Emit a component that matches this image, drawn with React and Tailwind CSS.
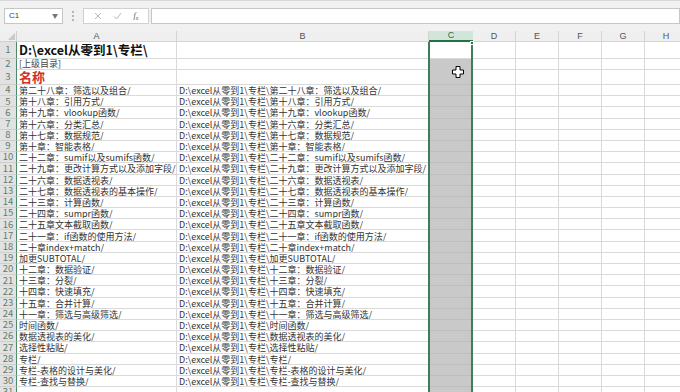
import React from 'react';

const base = 'D:\\excel从零到1\\专栏\\';

const items = [
  '第二十八章：筛选以及组合/',
  '第十八章：引用方式/',
  '第十九章：vlookup函数/',
  '第十六章：分类汇总/',
  '第十七章：数据规范/',
  '第十章：智能表格/',
  '二十二章：sumif以及sumifs函数/',
  '二十九章：更改计算方式以及添加字段/',
  '二十六章：数据透视表/',
  '二十七章：数据透视表的基本操作/',
  '二十三章：计算函数/',
  '二十四章：sumpr函数/',
  '二十五章文本截取函数/',
  '二十一章：if函数的使用方法/',
  '二十章index+match/',
  '加更SUBTOTAL/',
  '十二章：数据验证/',
  '十三章：分裂/',
  '十四章：快速填充/',
  '十五章：合并计算/',
  '十一章：筛选与高级筛选/',
  '时间函数/',
  '数据透视表的美化/',
  '选择性粘贴/',
  '专栏/',
  '专栏-表格的设计与美化/',
  '专栏-查找与替换/',
  '',
];

const cols = ['D', 'E', 'F', 'G', 'H'];
const grid = 'grid grid-cols-[17px_160px_252px_44px_43px_43px_43px_43px_43px]';
const font = { fontFamily: '"Noto Sans CJK SC", "Noto Sans", sans-serif' };

const RowHead = ({ n }) => (
  <div className="flex items-center justify-center bg-[#e2e2e2] border-r border-r-[#4f8a68] border-b border-b-[#cfcfcf] text-[9.5px] text-[#5e7d6b] leading-none">
    {n}
  </div>
);

const Cell = ({ children, className = '' }) => (
  <div className={`flex items-center overflow-hidden whitespace-nowrap border-r border-b border-[#dadada] px-[2px] leading-none ${className}`}>
    {children}
  </div>
);

const SelCell = ({ active }) => (
  <div className={`border-b ${active ? 'bg-white border-[#dadada]' : 'bg-[#c9c9c9] border-[#bdbdbd]'}`} />
);

const Blank = () => <div className="border-r border-b border-[#dadada]" />;

const Row = ({ n, h, a, b, aClass = '', bClass = '' }) => (
  <div className={`${grid} ${h}`}>
    <RowHead n={n} />
    <Cell className={aClass}>{a}</Cell>
    <Cell className={bClass}>{b}</Cell>
    <SelCell active={n === 1} />
    {cols.map((c) => <Blank key={c} />)}
  </div>
);

const Cursor = () => (
  <svg width="12" height="12" viewBox="0 0 12 12" className="absolute left-[452px] top-[66px]">
    <path d="M4 0.5h4v3.5h3.5v4H8v3.5H4V8H0.5V4H4z" fill="#fff" stroke="#000" strokeWidth="1" />
  </svg>
);

export default function App() {
  return (
    <div className="w-[680px] h-[392px] overflow-hidden bg-white relative" style={font}>
      {/* formula bar */}
      <div className="h-[31px] bg-[#f1f1f1] pt-[7px] flex items-start border-t border-[#d8d8d8]">
        <div className="ml-[4px] w-[59px] h-[16px] bg-white border border-[#c6c6c6] flex items-center justify-between px-[4px]">
          <span className="text-[8px] text-[#444] leading-none" style={{ fontFamily: '"Liberation Sans", sans-serif' }}>C1</span>
          <span className="text-[6px] text-[#777] leading-none">▼</span>
        </div>
        <div className="w-[20px] h-[16px] flex flex-col items-center justify-center gap-[2px]">
          <span className="w-[2px] h-[2px] bg-[#b5b5b5]" />
          <span className="w-[2px] h-[2px] bg-[#b5b5b5]" />
          <span className="w-[2px] h-[2px] bg-[#b5b5b5]" />
        </div>
        <div className="w-[66px] h-[16px] bg-white border border-[#d0d0d0] flex items-center justify-around px-[4px] text-[#bdbdbd]">
          <svg width="8" height="8" viewBox="0 0 8 8"><path d="M1 1l6 6M7 1l-6 6" stroke="#b8b8b8" strokeWidth="1" /></svg>
          <svg width="9" height="8" viewBox="0 0 9 8"><path d="M1 4.5l2.5 2.5L8 1" stroke="#b8b8b8" strokeWidth="1" fill="none" /></svg>
          <span className="text-[8px] italic text-[#555] leading-none" style={{ fontFamily: '"Liberation Serif", serif' }}>f<sub className="text-[6px]">x</sub></span>
        </div>
        <div className="ml-[2px] flex-1 h-[16px] bg-white border border-[#c6c6c6]" />
      </div>

      {/* column headers */}
      <div className={`${grid} h-[11px] bg-[#efefef] text-[9px] text-[#555] leading-none`} style={{ fontFamily: '"Liberation Sans", sans-serif' }}>
        <div className="border-r border-b border-[#cfcfcf] relative overflow-hidden">
          <div className="absolute right-[1px] bottom-[1px] w-0 h-0 border-l-[7px] border-l-transparent border-b-[7px] border-b-[#c9c9c9]" />
        </div>
        <div className="flex items-center justify-center border-r border-b border-[#d4d4d4]">A</div>
        <div className="flex items-center justify-center border-r border-b border-[#d4d4d4]">B</div>
        <div className="flex items-center justify-center bg-[#d2e5da] text-[#2f6b4a] border-b-2 border-[#217346]">C</div>
        {cols.map((c) => (
          <div key={c} className="flex items-center justify-center border-r border-b border-[#d4d4d4]">{c}</div>
        ))}
      </div>

      {/* sheet */}
      <div className="relative">
        <Row n={1} h="h-[17px]" a={base} b="" aClass="text-[12.5px] font-bold text-[#111] pt-[1px]" />
        <Row n={2} h="h-[10px]" a="[上级目录]" b="" aClass="text-[9px] text-[#444]" />
        <Row n={3} h="h-[16px]" a="名称" b="" aClass="text-[13px] font-bold text-[#d0302a]" />
        {items.map((t, i) => (
          <Row
            key={i}
            n={i + 4}
            h="h-[11.2px]"
            a={t}
            b={t ? base + t : ''}
            aClass="text-[9px] text-[#333] pt-[1px]"
            bClass="text-[9px] text-[#333] pt-[1px]"
          />
        ))}

        {/* column selection frame */}
        <div className="absolute left-[428px] top-0 w-[45px] h-[360px] border-x-2 border-[#3f7c5c] pointer-events-none" />
        <div className="absolute left-[470px] top-[-1px] w-[4px] h-[4px] bg-[#217346] border border-white" />
      </div>

      <Cursor />
    </div>
  );
}
